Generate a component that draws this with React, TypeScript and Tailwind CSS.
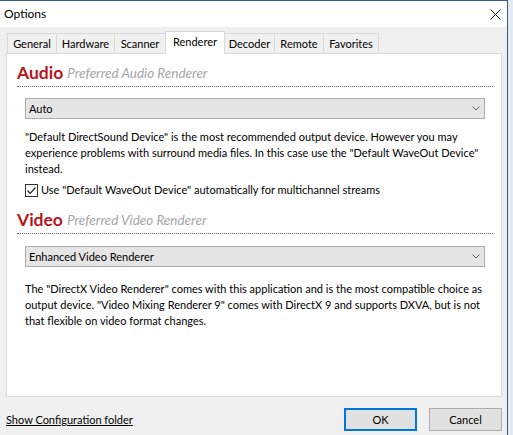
import React from "react";

function Combo({ value }: { value: string }) {
  return (
    <div className="mx-[8px] h-[21px] bg-[#e5e5e5] border border-[#adadad] flex items-center justify-between pl-[3px] pr-[3px]">
      <span className="leading-[16px]">{value}</span>
      <svg width="8" height="5" viewBox="0 0 8 5" className="mr-[1px]">
        <path d="M0.5 0.5 L4 4 L7.5 0.5" fill="none" stroke="#606060" strokeWidth="1" />
      </svg>
    </div>
  );
}

function Heading({ title, sub }: { title: string; sub: string }) {
  return (
    <div className="h-[25px] border-b border-dotted border-[#6a6a6a] flex items-end whitespace-nowrap">
      <span className="text-[17.5px] leading-[22px] font-bold text-[#b8141c] mb-[2px]">{title}</span>
      <span className="text-[13.5px] leading-[22px] italic text-[#a6a6a6] ml-[4px] mb-[2px]">{sub}</span>
    </div>
  );
}

export default function App() {
  const tabs = [
    { n: "General", w: 50 },
    { n: "Hardware", w: 59 },
    { n: "Scanner", w: 52 },
    { n: "Renderer", w: 60, sel: true },
    { n: "Decoder", w: 51 },
    { n: "Remote", w: 50 },
    { n: "Favorites", w: 56 },
  ];
  return (
    <div className="w-[513px] h-[435px] bg-[#e3eaf1] overflow-hidden font-['Lato',sans-serif] text-[11px] text-black">
      <div className="w-[508px] h-[435px] bg-[#f0f0f0] border-t border-r border-[#2d5d8f] flex flex-col">
        <div className="h-[26px] bg-white flex items-center justify-between pl-[4px] pr-[6px]">
          <span className="leading-[16px] text-[12px]">Options</span>
          <svg width="11" height="11" viewBox="0 0 11 11">
            <path d="M0.5 0.5 L10.5 10.5 M10.5 0.5 L0.5 10.5" stroke="#111" strokeWidth="1" />
          </svg>
        </div>
        <div className="h-[26px] flex items-end pl-[7px]">
          {tabs.map((t, i) =>
            t.sel ? (
              <div
                key={t.n}
                style={{ width: t.w }}
                className="relative z-10 h-[23px] -mb-px -ml-px bg-white border-l border-t border-r border-[#d9d9d9] flex justify-center pt-[2px] leading-[16px]"
              >
                {t.n}
              </div>
            ) : (
              <div
                key={t.n}
                style={{ width: t.w }}
                className={`h-[20px] bg-[#f0f0f0] border-l border-t border-r border-[#d9d9d9] flex justify-center items-center leading-[16px] ${i === 0 ? "" : "-ml-px"}`}
              >
                {t.n}
              </div>
            )
          )}
        </div>
        <div className="ml-[6px] w-[496px] h-[344px] bg-white border border-[#d9d9d9] pt-[8px] pl-[10px] pr-[8px] leading-[16px]">
          <Heading title="Audio" sub="Preferred Audio Renderer" />
          <div className="mt-[11px]">
            <Combo value="Auto" />
          </div>
          <p className="mt-[10px] mx-[8px] whitespace-nowrap">
            "Default DirectSound Device" is the most recommended output device. However you may
            <br />
            experience problems with surround media files. In this case use the "Default WaveOut Device"
            <br />
            instead.
          </p>
          <div className="mt-[5px] mx-[8px] flex items-center h-[16px]">
            <div className="w-[13px] h-[13px] border border-[#333333] bg-white flex items-center justify-center">
              <svg width="11" height="11" viewBox="0 0 11 11">
                <path d="M1.5 5.5 L4.2 8.3 L9.5 2.5" fill="none" stroke="#222" strokeWidth="1.2" />
              </svg>
            </div>
            <span className="ml-[3px] whitespace-nowrap">Use "Default WaveOut Device" automatically for multichannel streams</span>
          </div>
          <div className="mt-[11px]">
            <Heading title="Video" sub="Preferred Video Renderer" />
          </div>
          <div className="mt-[12px]">
            <Combo value="Enhanced Video Renderer" />
          </div>
          <p className="mt-[14px] mx-[8px] whitespace-nowrap">
            The "DirectX Video Renderer" comes with this application and is the most compatible choice as
            <br />
            output device. "Video Mixing Renderer 9" comes with DirectX 9 and supports DXVA, but is not
            <br />
            that flexible on video format changes.
          </p>
        </div>
        <div className="mt-[11px] flex items-center justify-between pl-[6px] pr-[5px]">
          <span className="underline leading-[16px]">Show Configuration folder</span>
          <div className="flex gap-[12px]">
            <button className="w-[73px] h-[23px] bg-[#e1e1e1] border-2 border-[#0078d7] leading-[16px]">OK</button>
            <button className="w-[73px] h-[23px] bg-[#e1e1e1] border border-[#adadad] leading-[16px]">Cancel</button>
          </div>
        </div>
      </div>
    </div>
  );
}
